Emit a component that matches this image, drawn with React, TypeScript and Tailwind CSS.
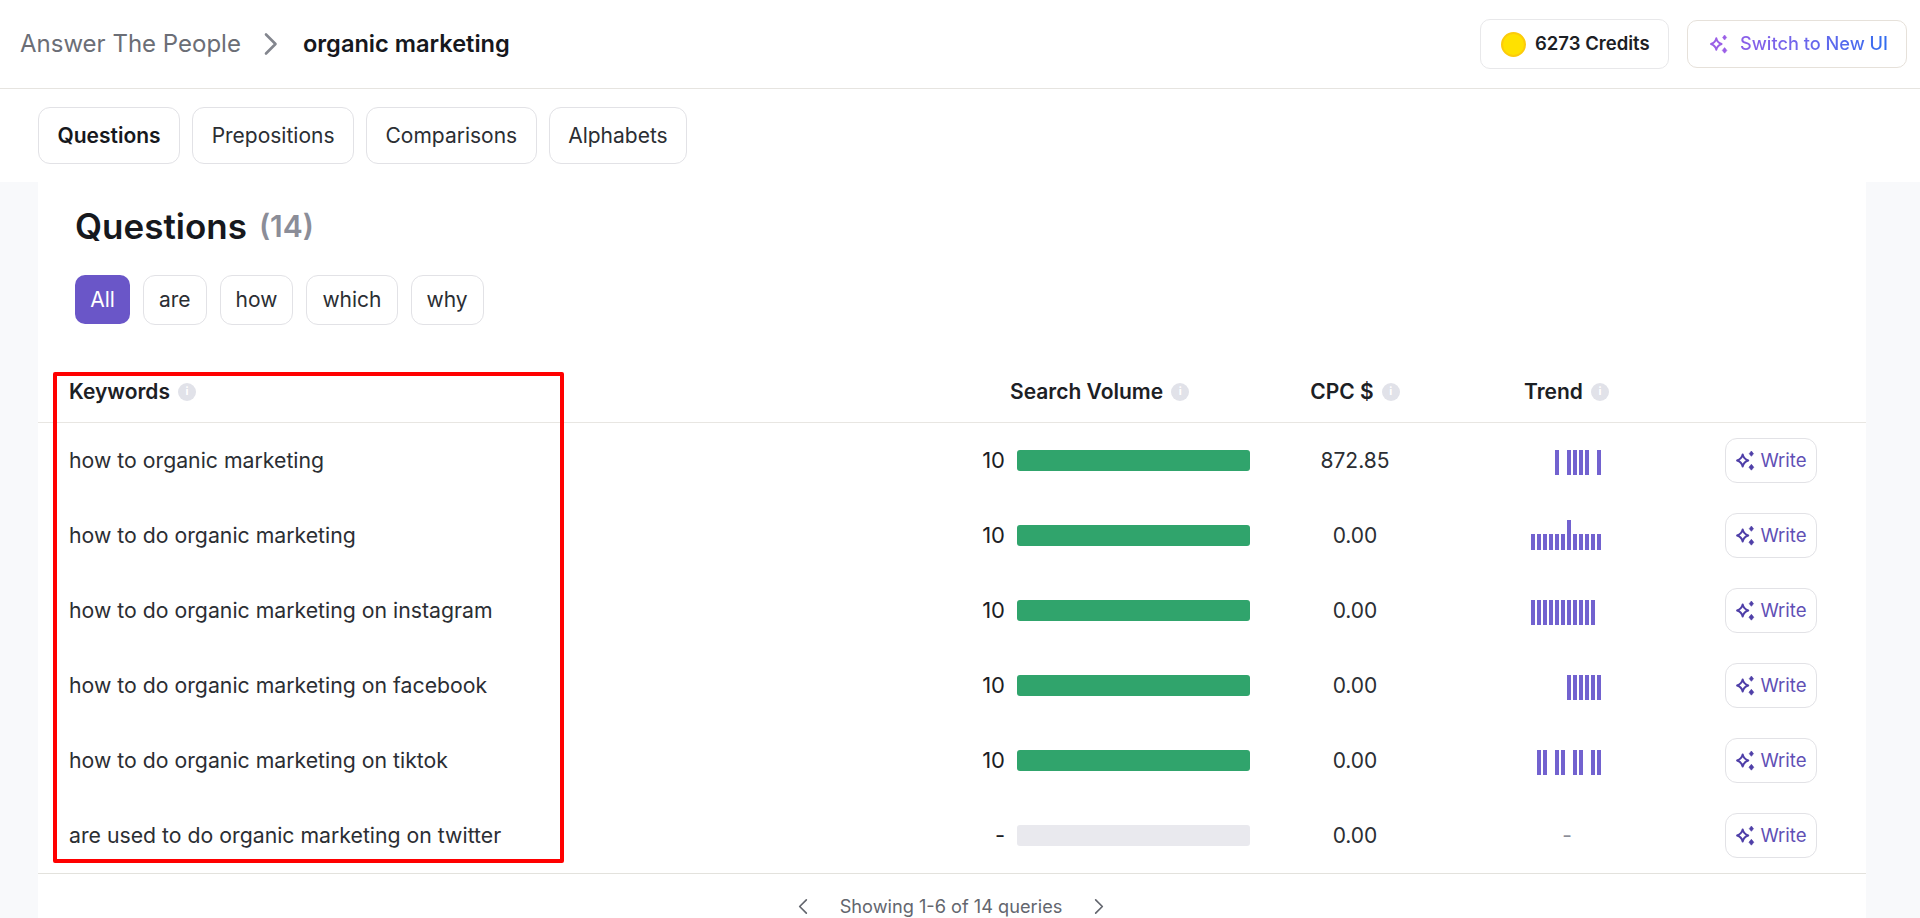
import React from "react";

const Sparkle = ({ className }: { className?: string }) => (
  <svg viewBox="0 0 20 20" className={className} fill="none">
    <path d="M7.3 4.2 C8 7.6 9.2 8.9 12.6 10 C9.2 11.1 8 12.4 7.3 15.8 C6.6 12.4 5.4 11.1 2 10 C5.4 8.9 6.6 7.6 7.3 4.2 Z" stroke="currentColor" strokeWidth="1.9" strokeLinejoin="round" />
    <path d="M15.6 1 L17.6 3.5 L15.6 6 L13.6 3.5 Z" fill="currentColor" stroke="currentColor" strokeWidth="0.6" strokeLinejoin="round" />
    <path d="M15.6 13.6 L17.9 16.4 L15.6 19.2 L13.3 16.4 Z" fill="currentColor" stroke="currentColor" strokeWidth="0.6" strokeLinejoin="round" />
  </svg>
);

const Info = () => (
  <span className="flex h-[18px] w-[18px] shrink-0 items-center justify-center rounded-full bg-[#e1e2e9] text-[11px] font-bold leading-none text-white">i</span>
);

const Th = ({ label }: { label: string }) => (
  <span className="flex items-center gap-[8px] text-[21px] font-semibold text-[#1c2024]">
    {label}
    <Info />
  </span>
);

const Bars = ({ data }: { data: number[] }) => (
  <div className="flex h-[30px] items-end justify-end gap-[2px] pb-[1px]">
    {data.map((h, i) => (
      <div key={i} className="w-[4px] bg-[#7262cf]" style={{ height: h }} />
    ))}
  </div>
);

const rows = [
  { k: "how to organic marketing", v: "10", c: "872.85", t: [25, 0, 25, 25, 25, 25, 0, 25] },
  { k: "how to do organic marketing", v: "10", c: "0.00", t: [16, 16, 16, 16, 16, 16, 30, 16, 16, 16, 16, 16] },
  { k: "how to do organic marketing on instagram", v: "10", c: "0.00", t: [25, 25, 25, 25, 25, 25, 25, 25, 25, 25, 25, 0] },
  { k: "how to do organic marketing on facebook", v: "10", c: "0.00", t: [25, 25, 25, 25, 25, 25] },
  { k: "how to do organic marketing on tiktok", v: "10", c: "0.00", t: [25, 25, 0, 25, 25, 0, 25, 25, 0, 25, 25] },
  { k: "are used to do organic marketing on twitter", v: "-", c: "0.00", t: null as number[] | null },
];

const tabs = ["Questions", "Prepositions", "Comparisons", "Alphabets"];
const chips = ["are", "how", "which", "why"];
const cols = "grid grid-cols-[922px_310px_170px_200px_226px]";

export default function App() {
  return (
    <div className="relative h-[918px] w-[1920px] overflow-hidden bg-[#f8f9fb] font-['Inter',sans-serif] text-[#1c2024]">
      <header className="flex h-[89px] items-center justify-between border-b border-[#e6e4e0] bg-white pl-[20px] pr-[13px]">
        <div className="flex items-center text-[24px]">
          <span className="text-[#6b6e76]">Answer The People</span>
          <svg viewBox="0 0 16 24" className="ml-[22px] mr-[24px] h-[24px] w-[16px] text-[#83868e]" fill="none" stroke="currentColor" strokeWidth="2.6" strokeLinecap="round" strokeLinejoin="round">
            <path d="M3 2.5 L12.5 12 L3 21.5" />
          </svg>
          <span className="text-[23.6px] font-semibold text-[#16181d]">organic marketing</span>
        </div>
        <div className="flex items-center gap-[18px]">
          <div className="flex h-[50px] w-[189px] items-center gap-[9px] rounded-[10px] border border-[#e8e8ea] bg-white pl-[20px] text-[18.5px] font-semibold">
            <span className="h-[25px] w-[25px] rounded-full border-[2px] border-[#fccb0b] bg-[#ffe100]" />
            6273 Credits
          </div>
          <div className="flex h-[48px] w-[220px] items-center gap-[11px] rounded-[10px] border border-[#e6e1da] bg-white pl-[21px] text-[18.2px] font-medium">
            <Sparkle className="h-[20px] w-[20px] text-[#9a5ee6]" />
            <span className="bg-gradient-to-r from-[#8b5ee8] to-[#2f6df0] bg-clip-text text-transparent">Switch to New UI</span>
          </div>
        </div>
      </header>

      <nav className="flex h-[93px] gap-[12px] bg-white pl-[38px] pt-[18px]">
        {tabs.map((t, i) => (
          <button
            key={t}
            className={`h-[57px] rounded-[12px] border border-[#e2e2e6] bg-white px-[18.5px] text-[21px] ${i === 0 ? "font-semibold text-[#16181d]" : "text-[#2b2e33]"}`}
          >
            {t}
          </button>
        ))}
      </nav>

      <main className="mx-[38px] h-[736px] w-[1828px] bg-white">
        <div className="flex h-[93px] items-start pt-[18px] pl-[37px]">
          <h1 className="text-[35px] font-semibold leading-[52px] text-[#16181d]">Questions</h1>
          <span className="ml-[12px] text-[30px] font-semibold leading-[52px] text-[#8b8d98]">(14)</span>
        </div>
        <div className="flex h-[50px] gap-[13px] pl-[37px]">
          <button className="h-[49px] w-[55px] rounded-[10px] bg-[#6a56c8] text-[21px] text-white">All</button>
          {chips.map((c) => (
            <button key={c} className="h-[50px] rounded-[12px] border border-[#e2e2e6] bg-white px-[15px] text-[21px] text-[#2b2e33]">
              {c}
            </button>
          ))}
        </div>

        <div className={`${cols} mt-[48px] h-[50px] items-center border-b border-[#e8e6e2] pb-[12px]`}>
          <div className="pl-[31px]"><Th label="Keywords" /></div>
          <div className="pl-[50px]"><Th label="Search Volume" /></div>
          <div className="flex justify-center"><Th label="CPC $" /></div>
          <div className="pl-[84px]"><Th label="Trend" /></div>
          <div />
        </div>

        {rows.map((r) => (
          <div key={r.k} className={`${cols} h-[75px] items-center text-[21px] text-[#2b2e33]`}>
            <div className="pl-[31px] text-[21.25px]">{r.k}</div>
            <div className="flex items-center justify-end gap-[12px] pr-[20px]">
              <span className="text-[22px] text-[#1c2024]">{r.v}</span>
              <div className={`h-[21px] w-[233px] rounded-[3px] ${r.t ? "bg-[#30a46c]" : "bg-[#e9e9ee]"}`} />
            </div>
            <div className="text-center">{r.c}</div>
            <div className="pr-[39px]">
              {r.t ? <Bars data={r.t} /> : <div className="pr-[29px] text-right text-[#8b8d98]">-</div>}
            </div>
            <div className="pl-[85px]">
              <button className="flex h-[45px] w-[92px] items-center justify-center gap-[4px] rounded-[12px] border border-[#e2e2e6] bg-white text-[18.6px] text-[#5f4fb5]">
                <Sparkle className="h-[21px] w-[21px] text-[#4f3fa8]" />
                Write
              </button>
            </div>
          </div>
        ))}

        <div className="flex h-[64px] items-center justify-center gap-[32px] border-t border-[#e3e2dd] pr-[2px] pt-[2px] text-[18.2px] text-[#63666e]">
          <svg viewBox="0 0 12 20" className="h-[17px] w-[10px]" fill="none" stroke="currentColor" strokeWidth="2" strokeLinecap="round" strokeLinejoin="round"><path d="M10 2 L2 10 L10 18" /></svg>
          <span>Showing 1-6 of 14 queries</span>
          <svg viewBox="0 0 12 20" className="h-[17px] w-[10px]" fill="none" stroke="currentColor" strokeWidth="2" strokeLinecap="round" strokeLinejoin="round"><path d="M2 2 L10 10 L2 18" /></svg>
        </div>
      </main>

      <div className="pointer-events-none absolute left-[53px] top-[372px] h-[491px] w-[511px] rounded-[2px] border-[4px] border-[#ff0000]" />
    </div>
  );
}
